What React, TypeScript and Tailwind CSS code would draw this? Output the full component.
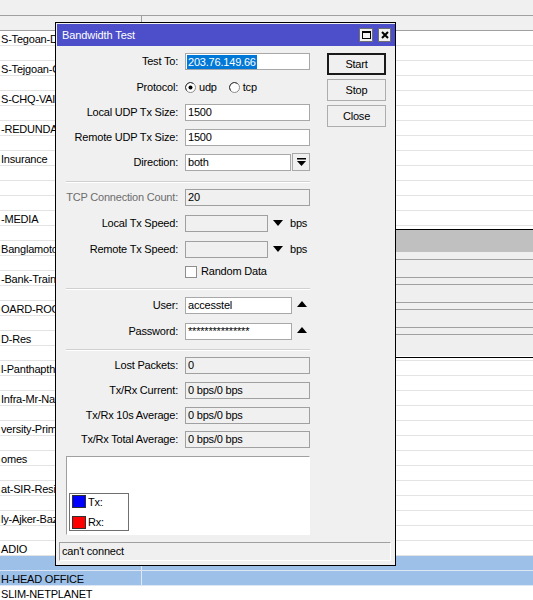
import React from 'react';

const font = "font-['Liberation_Sans',Arial,sans-serif]";

// rows of the list behind the dialog; rows after the dialog's bottom show the whole name
const listRows: { text?: string; blue?: boolean; full?: boolean }[] = [
  { text: 'S-Tegoan-D' },
  {},
  { text: 'S-Tejgoan-C' },
  {},
  { text: 'S-CHQ-VAI' },
  {},
  { text: '-REDUNDA' },
  {},
  { text: 'Insurance' },
  {},
  {},
  {},
  { text: '-MEDIA' },
  {},
  { text: 'Banglamoto' },
  {},
  { text: '-Bank-Train' },
  {},
  { text: 'OARD-ROO' },
  {},
  { text: 'D-Res' },
  {},
  { text: 'l-Panthapth' },
  {},
  { text: 'Infra-Mr-Nay' },
  {},
  { text: 'versity-Prima' },
  {},
  { text: 'omes' },
  {},
  { text: 'at-SIR-Resid' },
  {},
  { text: 'ly-Ajker-Baza' },
  {},
  { text: 'ADIO' },
  { blue: true },
  { text: 'H-HEAD OFFICE', blue: true, full: true },
  { text: 'SLIM-NETPLANET', full: true },
];

const DownArrow = () => (
  <svg width="10" height="6" viewBox="0 0 10 6">
    <polygon points="0,0 10,0 5,6" fill="#000" />
  </svg>
);

const UpArrow = () => (
  <svg width="10" height="6" viewBox="0 0 10 6">
    <polygon points="0,6 10,6 5,0" fill="#000" />
  </svg>
);

const Label = ({ children, muted }: { children: React.ReactNode; muted?: boolean }) => (
  <div className={`w-[119px] shrink-0 pr-[7px] text-right whitespace-nowrap ${muted ? 'text-[#6d6d6d]' : 'text-black'}`}>
    {children}
  </div>
);

const Field = ({ value, width = 'w-[125px]', disabled }: { value?: string; width?: string; disabled?: boolean }) => (
  <div
    className={`${width} h-[17px] border flex items-center px-[2px] whitespace-nowrap overflow-hidden ${
      disabled ? 'bg-[#f0f0f0] border-[#a0a0a0]' : 'bg-white border-[#a8a8a8]'
    }`}
  >
    {value}
  </div>
);

const Radio = ({ checked }: { checked?: boolean }) => (
  <svg width="11" height="11" viewBox="0 0 11 11">
    <circle cx="5.5" cy="5.5" r="5" fill="#fff" stroke="#8a8a8a" />
    <path d="M1.5 8.5 A5 5 0 0 1 8.5 1.5" fill="none" stroke="#404040" strokeWidth="1" />
    {checked && <circle cx="5.5" cy="5.5" r="2" fill="#000" />}
  </svg>
);

const Separator = ({ className }: { className: string }) => (
  <div className={`${className} w-[244px] h-[2px] border-t border-[#d0d0d0] bg-white`} />
);

export default function App() {
  return (
    <div className={`relative w-[533px] h-[600px] overflow-hidden bg-white text-[11px] tracking-[-0.2px] ${font}`}>
      {/* list behind */}
      <div className="h-[16px] bg-[#f0f0f0] border-b border-[#a0a0a0]" />
      <div className="h-[15px] bg-[#f0f0f0] border-b border-[#a0a0a0] flex">
        <div className="w-[142px] border-r border-[#a0a0a0]" />
      </div>
      {listRows.map((r, i) => (
        <div
          key={i}
          className={`h-[15px] border-b flex items-center whitespace-nowrap ${
            r.blue ? 'bg-[#9dc0e9] border-[#dde6f2]' : 'bg-white border-[#e3e3e3]'
          }`}
        >
          <div className={`w-[142px] h-full flex items-center ${r.blue ? 'border-r border-[#dfe8f4]' : ''}`}>
            <div className={`${r.full ? 'w-[140px]' : 'w-[55px]'} pl-px pt-[2px] overflow-hidden`}>{r.text}</div>
          </div>
        </div>
      ))}

      {/* other window partly hidden */}
      <div className="absolute left-[380px] top-[229px] w-[153px] h-[129px] border-y border-black bg-[#efefef] flex flex-col">
        <div className="h-[22px] bg-[#c0c0c0]" />
        <div className="mt-[7px] h-[19px] border-y border-[#a0a0a0]" />
        <div className="mt-[6px] h-[19px] border-y border-[#a0a0a0]" />
        <div className="mt-[6px] h-[19px] border-y border-[#a0a0a0]" />
        <div className="mt-[6px] flex-1 border-t border-[#a0a0a0] border-b border-b-white" />
      </div>

      {/* dialog */}
      <div className="absolute left-[55px] top-[22px] w-[341px] h-[544px] border border-black bg-[#f0f0f0] flex flex-col">
        <div className="ml-px mt-px h-[22px] bg-[#4c4fc9] flex items-center justify-between pl-[5px] pr-[4px]">
          <span className="text-white text-[11px] tracking-[-0.1px]">Bandwidth Test</span>
          <div className="flex gap-[5px]">
            <div className="w-[14px] h-[14px] bg-[#f0f0f0] border border-[#707070] flex items-center justify-center">
              <div className="w-[9px] h-[8px] border border-black border-t-2" />
            </div>
            <div className="w-[13px] h-[14px] bg-[#f0f0f0] border border-[#707070] flex items-center justify-center">
              <svg width="8" height="8" viewBox="0 0 8 8">
                <path d="M1 1 L7 7 M7 1 L1 7" stroke="#000" strokeWidth="2" />
              </svg>
            </div>
          </div>
        </div>

        <div className="flex pl-[10px]">
          {/* form */}
          <div className="w-[244px] flex flex-col">
            <div className="mt-[7px] h-[17px] flex items-center">
              <Label>Test To:</Label>
              <div className="w-[125px] h-[17px] border border-[#a8a8a8] bg-white flex items-center px-px">
                <span className="bg-[#0078d7] text-white leading-[14px] px-px">203.76.149.66</span>
              </div>
            </div>
            <div className="mt-[9px] h-[17px] flex items-center">
              <Label>Protocol:</Label>
              <div className="flex items-center">
                <Radio checked />
                <span className="ml-[3px]">udp</span>
                <span className="ml-[12px] flex items-center">
                  <Radio />
                </span>
                <span className="ml-[3px]">tcp</span>
              </div>
            </div>
            <div className="mt-[8px] h-[17px] flex items-center">
              <Label>Local UDP Tx Size:</Label>
              <Field value="1500" />
            </div>
            <div className="mt-[8px] h-[17px] flex items-center">
              <Label>Remote UDP Tx Size:</Label>
              <Field value="1500" />
            </div>
            <div className="mt-[7px] h-[18px] flex items-center">
              <Label>Direction:</Label>
              <Field value="both" width="w-[107px]" />
              <div className="ml-px w-[18px] h-[18px] bg-[#f0f0f0] border border-[#a8a8a8] flex items-center justify-center">
                <svg width="9" height="8" viewBox="0 0 9 8">
                  <rect x="0" y="0" width="9" height="1.5" fill="#000" />
                  <polygon points="0,3 9,3 4.5,8" fill="#000" />
                </svg>
              </div>
            </div>
            <Separator className="mt-[10px]" />
            <div className="mt-[5px] h-[18px] flex items-center">
              <Label muted>TCP Connection Count:</Label>
              <Field value="20" disabled />
            </div>
            <div className="mt-[8px] h-[18px] flex items-center">
              <Label>Local Tx Speed:</Label>
              <Field disabled width="w-[83px]" />
              <span className="ml-[5px] mb-px"><DownArrow /></span>
              <span className="ml-[7px]">bps</span>
            </div>
            <div className="mt-[8px] h-[18px] flex items-center">
              <Label>Remote Tx Speed:</Label>
              <Field disabled width="w-[83px]" />
              <span className="ml-[5px] mb-px"><DownArrow /></span>
              <span className="ml-[7px]">bps</span>
            </div>
            <div className="mt-[7px] h-[13px] flex items-center pl-[119px]">
              <div className="w-[12px] h-[12px] bg-white border border-[#8f8f8f]" />
              <span className="ml-[4px]">Random Data</span>
            </div>
            <Separator className="mt-[10px]" />
            <div className="mt-[7px] h-[17px] flex items-center">
              <Label>User:</Label>
              <Field value="accesstel" width="w-[107px]" />
              <span className="ml-[5px] mb-[3px]"><UpArrow /></span>
            </div>
            <div className="mt-[9px] h-[17px] flex items-center">
              <Label>Password:</Label>
              <Field value="***************" width="w-[107px]" />
              <span className="ml-[5px] mb-[3px]"><UpArrow /></span>
            </div>
            <Separator className="mt-[9px]" />
            <div className="mt-[6px] h-[17px] flex items-center">
              <Label>Lost Packets:</Label>
              <Field value="0" disabled />
            </div>
            <div className="mt-[8px] h-[17px] flex items-center">
              <Label>Tx/Rx Current:</Label>
              <Field value="0 bps/0 bps" disabled />
            </div>
            <div className="mt-[8px] h-[17px] flex items-center">
              <Label>Tx/Rx 10s Average:</Label>
              <Field value="0 bps/0 bps" disabled />
            </div>
            <div className="mt-[7px] h-[17px] flex items-center">
              <Label>Tx/Rx Total Average:</Label>
              <Field value="0 bps/0 bps" disabled />
            </div>
            <div className="mt-[8px] w-[244px] h-[79px] bg-white border border-[#a0a0a0] border-r-white border-b-white flex items-end pl-[2px] pb-[3px]">
              <div className="w-[60px] h-[38px] border border-[#707070] flex flex-col justify-center gap-[4px] pl-[2px]">
                <div className="flex items-center">
                  <div className="w-[14px] h-[13px] bg-[#0000ff] border border-[#303030]" />
                  <span className="ml-[2px]">Tx:</span>
                </div>
                <div className="flex items-center">
                  <div className="w-[14px] h-[13px] bg-[#ff0000] border border-[#303030]" />
                  <span className="ml-[2px]">Rx:</span>
                </div>
              </div>
            </div>
          </div>

          {/* buttons */}
          <div className="ml-[17px] w-[59px] flex flex-col gap-[4px] pt-[7px]">
            <div className="h-[22px] border-2 border-[#1a1a1a] bg-[#f0f0f0] flex items-center justify-center">Start</div>
            <div className="h-[22px] border border-[#adadad] bg-[#f0f0f0] flex items-center justify-center">Stop</div>
            <div className="h-[22px] border border-[#adadad] bg-[#f0f0f0] flex items-center justify-center">Close</div>
          </div>
        </div>

        <div className="mt-[7px] ml-[3px] mr-[4px] h-[19px] border border-[#a0a0a0] border-r-white border-b-white flex items-center px-[2px]">
          can't connect
        </div>
      </div>
    </div>
  );
}
